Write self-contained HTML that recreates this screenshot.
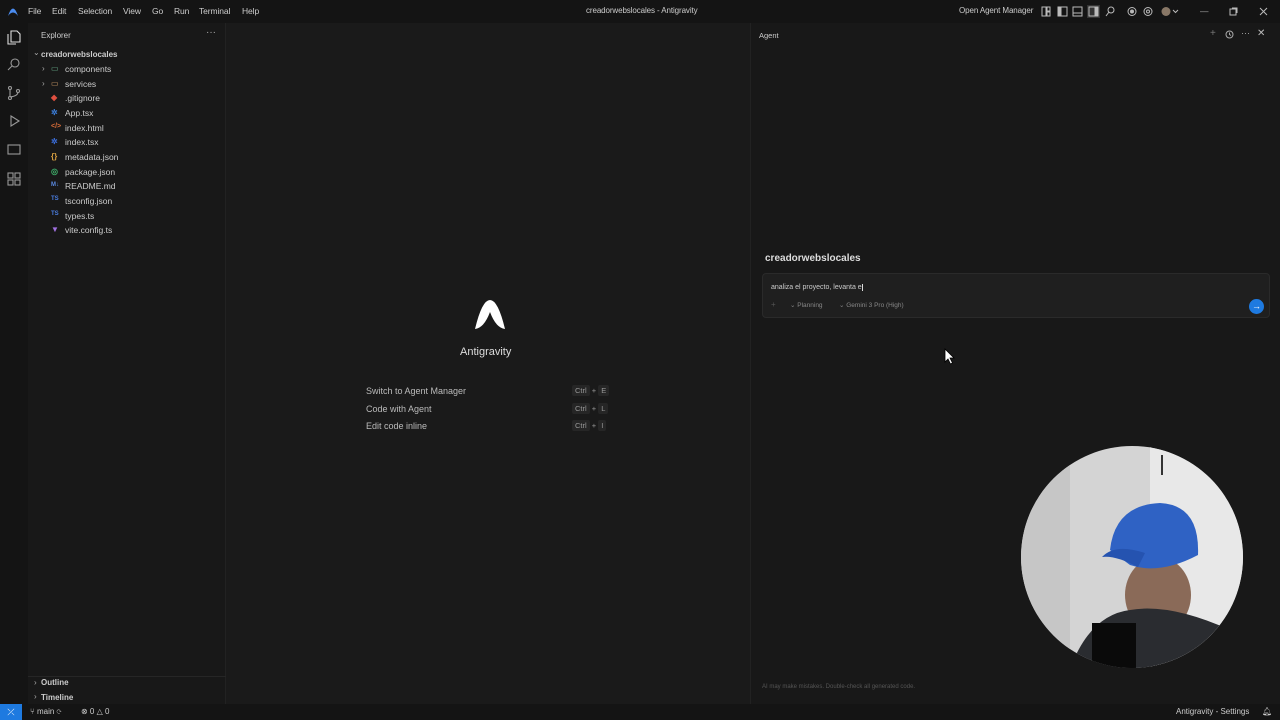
<!DOCTYPE html>
<html><head><meta charset="utf-8"><style>
*{margin:0;padding:0;box-sizing:border-box}
body{width:1280px;height:720px;overflow:hidden;background:#1a1a1a;font-family:"Liberation Sans",sans-serif;color:#ccc;position:relative;font-size:9px}
.abs{position:absolute}
#title{left:0;top:0;width:1280px;height:23px;background:#141414}
#title .m{position:absolute;top:6px;font-size:8.5px;color:#ccc;letter-spacing:-0.1px}
#act{left:0;top:23px;width:28px;height:681px;background:#141414}
#side{left:28px;top:23px;width:198px;height:681px;background:#181818;border-right:1px solid #222}
#editor{left:226px;top:23px;width:524px;height:681px;background:#1a1a1a}
#agent{left:750px;top:23px;width:530px;height:681px;background:#181818;border-left:1px solid #222}
#status{left:0;top:704px;width:1280px;height:16px;background:#141414;font-size:8px;color:#ccc}
.f{position:absolute;left:65px;font-size:8.5px;color:#ccc}
.ic{position:absolute;left:51px;font-size:8px;font-weight:bold}
.sc{position:absolute;font-size:9px;color:#bbb}
.k{position:absolute;font-size:7.5px;color:#999}
.k span{background:#262626;padding:1px 3px;border-radius:2px}
</style></head><body>
<div id="title" class="abs">
<svg class="abs" style="left:7px;top:5px" width="12" height="12" viewBox="0 0 12 12"><path d="M1 11 Q6 -4 11 11 Q6 4 1 11Z" fill="#4b8cf0"/></svg>
<span class="m" style="left:28px">File</span><span class="m" style="left:52px">Edit</span><span class="m" style="left:78px">Selection</span><span class="m" style="left:123px">View</span><span class="m" style="left:152px">Go</span><span class="m" style="left:174px">Run</span><span class="m" style="left:199px">Terminal</span><span class="m" style="left:242px">Help</span>
<span class="m" style="left:586px;font-size:8px">creadorwebslocales - Antigravity</span>
<span class="m" style="left:959px;font-size:8px">Open Agent Manager</span>
<svg class="abs" style="left:1040px;top:5px" width="145" height="13" viewBox="0 0 145 13" fill="none" stroke="#bbb" stroke-width="1"><rect x="2" y="2" width="4" height="9"/><rect x="7" y="2" width="3" height="4"/><rect x="7" y="7" width="3" height="4"/><rect x="18" y="2" width="9" height="9"/><rect x="18" y="2" width="3" height="9" fill="#bbb"/><rect x="33" y="2" width="9" height="9"/><line x1="33" y1="8" x2="42" y2="8"/><rect x="47" y="0" width="13" height="13" fill="#333" stroke="none"/><rect x="49" y="2" width="9" height="9"/><rect x="55" y="2" width="3" height="9" fill="#bbb"/><circle cx="71" cy="5" r="3"/><line x1="69" y1="7" x2="66" y2="11"/><circle cx="92" cy="6.5" r="4"/><circle cx="92" cy="6.5" r="1.5" fill="#bbb"/><circle cx="108" cy="6.5" r="4"/><circle cx="108" cy="6.5" r="1.5"/><circle cx="126" cy="6.5" r="4.5" fill="#887766" stroke="none"/><path d="M133 5l2.5 2.5L138 5"/></svg>
<span class="m" style="left:1200px;color:#aaa">—</span>
<svg class="abs" style="left:1229px;top:7px" width="9" height="9" fill="none" stroke="#bbb"><rect x="1" y="2" width="6" height="6"/><path d="M3 1h5v5"/></svg>
<svg class="abs" style="left:1259px;top:7px" width="9" height="9" stroke="#bbb"><path d="M1 1l7 7M8 1L1 8"/></svg>
</div>
<div id="act" class="abs">
<svg class="abs" style="left:7px;top:7px" width="14" height="160" viewBox="0 0 14 160" fill="none" stroke="#999" stroke-width="1.1"><path d="M4 1h6l3 3v8H4z M1 4v10h8" stroke="#ddd"/><circle cx="8" cy="33" r="4"/><line x1="5" y1="36" x2="1" y2="40"/><circle cx="3" cy="58" r="1.5"/><circle cx="3" cy="68" r="1.5"/><circle cx="11" cy="61" r="1.5"/><path d="M3 59v8M11 62q0 4-8 5"/><path d="M4 86l8 5-8 5z"/><rect x="1" y="115" width="12" height="9"/><rect x="1" y="143" width="5" height="5"/><rect x="8" y="143" width="5" height="5"/><rect x="1" y="150" width="5" height="5"/><rect x="8" y="150" width="5" height="5"/></svg>
</div>
<div id="side" class="abs">
<span class="abs" style="left:13px;top:8px;font-size:8px;color:#ccc">Explorer</span>
<span class="abs" style="left:178px;top:4px;font-size:10px;color:#aaa">···</span>
</div>
<span class="abs" style="left:33px;top:48px;font-size:8px;color:#aaa">⌄</span>
<span class="abs" style="left:41px;top:50px;font-size:8px;font-weight:bold;color:#ccc">creadorwebslocales</span>
<span class="abs" style="left:42px;top:64px;font-size:8px;color:#aaa">›</span><span class="ic" style="top:64px;color:#6a8;font-weight:normal">▭</span><span class="f" style="top:64px">components</span>
<span class="abs" style="left:42px;top:79px;font-size:8px;color:#aaa">›</span><span class="ic" style="top:79px;color:#c96;font-weight:normal">▭</span><span class="f" style="top:79px">services</span>
<span class="ic" style="top:93px;color:#e05040">◆</span><span class="f" style="top:93px">.gitignore</span>
<span class="ic" style="top:108px;color:#3a7bd5">✲</span><span class="f" style="top:108px">App.tsx</span>
<span class="ic" style="top:123px;color:#e0703a;font-size:7px">&lt;/&gt;</span><span class="f" style="top:123px">index.html</span>
<span class="ic" style="top:137px;color:#3a6bd5">✲</span><span class="f" style="top:137px">index.tsx</span>
<span class="ic" style="top:152px;color:#d9a040">{}</span><span class="f" style="top:152px">metadata.json</span>
<span class="ic" style="top:167px;color:#3fae6a">◎</span><span class="f" style="top:167px">package.json</span>
<span class="ic" style="top:182px;color:#5a8ae0;font-size:6px">M↓</span><span class="f" style="top:181px">README.md</span>
<span class="ic" style="top:196px;color:#4a7de0;font-size:6px">TS</span><span class="f" style="top:196px">tsconfig.json</span>
<span class="ic" style="top:211px;color:#4a7de0;font-size:6px">TS</span><span class="f" style="top:211px">types.ts</span>
<span class="ic" style="top:225px;color:#a070e0">▼</span><span class="f" style="top:225px">vite.config.ts</span>
<div class="abs" style="left:28px;top:676px;width:198px;height:1px;background:#262626"></div>
<span class="abs" style="left:34px;top:678px;font-size:8px;color:#aaa">›</span><span class="abs" style="left:41px;top:678px;font-size:8px;font-weight:bold">Outline</span>
<span class="abs" style="left:34px;top:692px;font-size:8px;color:#aaa">›</span><span class="abs" style="left:41px;top:693px;font-size:8px;font-weight:bold">Timeline</span>
<div id="editor" class="abs"></div>
<svg class="abs" style="left:474px;top:300px" width="32" height="30" viewBox="0 0 32 30"><path d="M1 29 Q10 28 16 12 Q22 28 31 29 Q24 0 16 0 Q8 0 1 29Z" fill="#fff"/></svg>
<span class="abs" style="left:460px;top:346px;font-size:11px;color:#ddd">Antigravity</span>
<span class="sc" style="left:366px;top:386px">Switch to Agent Manager</span>
<span class="sc" style="left:366px;top:404px">Code with Agent</span>
<span class="sc" style="left:366px;top:421px">Edit code inline</span>
<span class="k" style="left:572px;top:386px"><span>Ctrl</span> + <span>E</span></span>
<span class="k" style="left:572px;top:404px"><span>Ctrl</span> + <span>L</span></span>
<span class="k" style="left:572px;top:421px"><span>Ctrl</span> + <span>I</span></span>
<div id="agent" class="abs">
<span class="abs" style="left:8px;top:8px;font-size:7.5px;color:#ccc">Agent</span>
<span class="abs" style="left:459px;top:5px;font-size:10px;color:#777">+</span>
<svg class="abs" style="left:474px;top:7px" width="9" height="9" fill="none" stroke="#aaa"><circle cx="4.5" cy="4.5" r="3.5"/><path d="M4.5 2.5v2l1.5 1"/></svg>
<span class="abs" style="left:490px;top:5px;font-size:9px;color:#aaa">···</span>
<span class="abs" style="left:506px;top:5px;font-size:10px;color:#bbb">✕</span>
<span class="abs" style="left:14px;top:230px;font-size:10px;font-weight:bold;color:#ddd">creadorwebslocales</span>
<div class="abs" style="left:11px;top:250px;width:508px;height:45px;background:#1f1f1f;border:1px solid #2a2a2a;border-radius:4px">
<span class="abs" style="left:8px;top:10px;font-size:7px;color:#ccc">analiza el proyecto, levanta e<span style="border-left:1px solid #ddd;margin-left:0">&nbsp;</span></span>
<span class="abs" style="left:8px;top:26px;font-size:8px;color:#555">+</span>
<span class="abs" style="left:27px;top:27px;font-size:6.5px;color:#888">⌄ Planning</span>
<span class="abs" style="left:76px;top:27px;font-size:6.5px;color:#888">⌄ Gemini 3 Pro (High)</span>
<div class="abs" style="left:486px;top:25px;width:15px;height:15px;border-radius:50%;background:#1e7ae0;color:#fff;font-size:9px;text-align:center;line-height:15px">→</div>
</div>
<span class="abs" style="left:11px;top:661px;font-size:6px;color:#555">AI may make mistakes. Double-check all generated code.</span>
</div>
<svg class="abs" style="left:944px;top:348px" width="12" height="17" viewBox="0 0 12 17"><path d="M1 1v13l3-3 2.5 5 2-1-2.5-5h4z" fill="#fff" stroke="#000" stroke-width="0.8"/></svg>
<svg class="abs" style="left:1020px;top:445px" width="224" height="224" viewBox="0 0 224 224"><defs><clipPath id="c"><circle cx="112" cy="112" r="111"/></clipPath></defs><g clip-path="url(#c)"><rect width="224" height="224" fill="#d4d4d4"/><rect x="130" y="0" width="94" height="224" fill="#e8e8e8"/><rect x="0" y="0" width="50" height="224" fill="#c6c6c6"/><rect x="141" y="10" width="2" height="20" fill="#333"/><ellipse cx="138" cy="150" rx="33" ry="38" fill="#8a6a58"/><path d="M90 105 Q95 60 140 58 Q180 60 178 110 Q140 130 110 120 Z" fill="#2f62c4"/><path d="M82 112 Q95 98 125 108 L118 122 Q95 110 82 112Z" fill="#2553b0"/><path d="M50 224 Q70 170 110 165 Q150 158 210 185 L224 224Z" fill="#2a2c30"/><rect x="72" y="178" width="44" height="60" fill="#0a0a0a"/></g></svg>
<div id="status" class="abs">
<div class="abs" style="left:0;top:0;width:22px;height:16px;background:#1e7ae0;color:#fff;text-align:center;font-size:9px;line-height:16px">⤫</div>
<span class="abs" style="left:30px;top:3px">⑂ main ⟳</span>
<span class="abs" style="left:81px;top:3px">⊗ 0 △ 0</span>
<span class="abs" style="left:1176px;top:3px">Antigravity - Settings</span>
<span class="abs" style="left:1262px;top:3px">🔔︎</span>
</div>
</body></html>
